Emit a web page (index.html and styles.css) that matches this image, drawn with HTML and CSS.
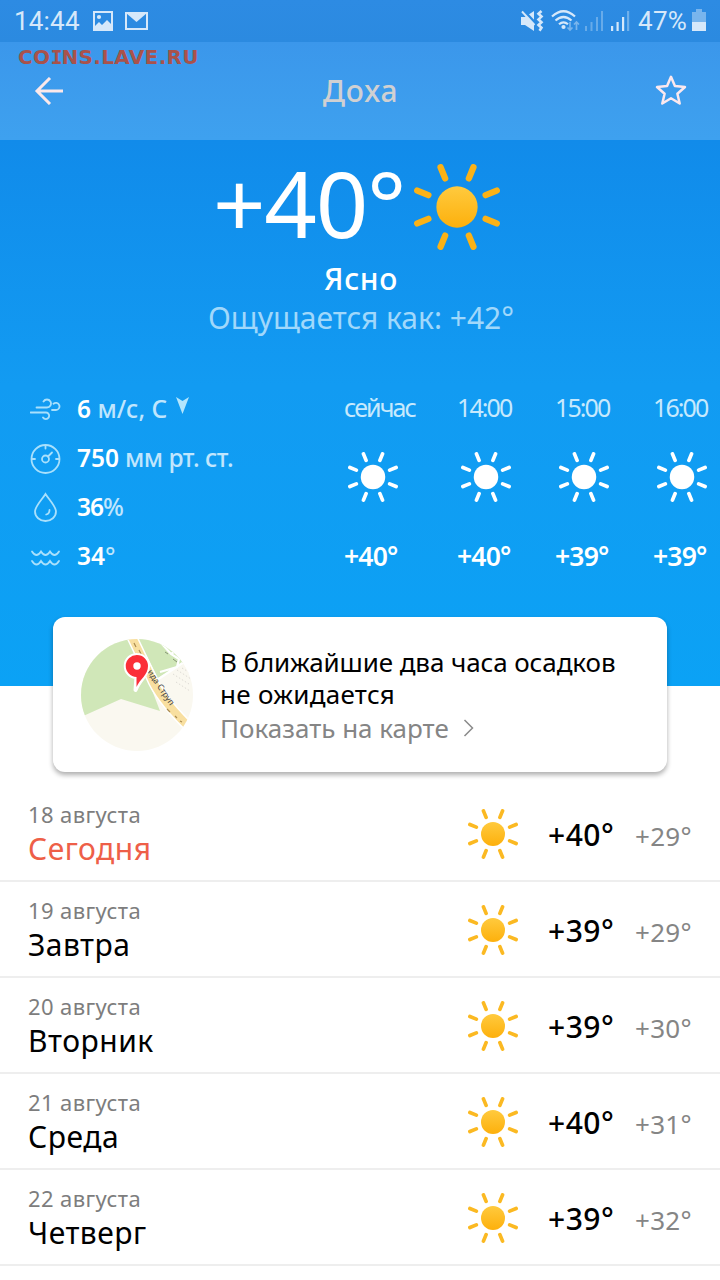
FILE: index.html
```
<!DOCTYPE html>
<html lang="ru">
<head>
<meta charset="utf-8">
<title>Доха — погода</title>
<link rel="stylesheet" href="styles.css">
</head>
<body>
<svg class="defs" width="0" height="0" aria-hidden="true">
  <defs>
    <linearGradient id="sun-fill" x1="0" y1="0" x2="0" y2="1">
      <stop offset="0" stop-color="#ffca3e"/>
      <stop offset="1" stop-color="#fdb00c"/>
    </linearGradient>
    <symbol id="rays" viewBox="0 0 100 100">
      <path d="M63.8 16.7L69.1 3.8M83.3 36.2L96.2 30.9M83.3 63.8L96.2 69.1M63.8 83.3L69.1 96.2M36.2 83.3L30.9 96.2M16.7 63.8L3.8 69.1M16.7 36.2L3.8 30.9M36.2 16.7L30.9 3.8" fill="none" stroke="currentColor" stroke-width="7.400" stroke-linecap="round"/>
    </symbol>
    <symbol id="sun" viewBox="0 0 100 100">
      <use href="#rays"/>
      <circle cx="50" cy="50" r="24" fill="url(#sun-fill)"/>
    </symbol>
    <symbol id="sun-white" viewBox="0 0 100 100">
      <use href="#rays"/>
      <circle cx="50" cy="50" r="24.5" fill="currentColor"/>
    </symbol>
  </defs>
</svg>

<div class="status">
  <span class="clock">14:44</span>
  <svg class="st-photo" width="22" height="20" viewBox="0 0 22 20"><path fill-rule="evenodd" fill="currentColor" d="M1 0h20v20H1zM3 2v13l4-4 3 3 5-5 4 4V2z"/><circle cx="7" cy="6" r="2.1" fill="currentColor"/></svg>
  <svg class="st-mail" width="24" height="18" viewBox="0 0 24 18"><path d="M1 1h21v16H1z" fill="none" stroke="currentColor" stroke-width="2"/><path d="M1 1h21L11.500 10z" fill="currentColor"/></svg>
  <span class="grow"></span>
  <svg class="st-mute" width="23" height="22" viewBox="0 0 23 22"><path d="M0 7h4l9-6v20l-9-6H0z" fill="currentColor"/><path d="M1 -1l14 15" stroke="#2b8ae1" stroke-width="3"/><path d="M1 1.500l12.500 13.500" fill="none" stroke="currentColor" stroke-width="1.900"/><path d="M20.500 1l-3 2.800 3 2.800-3 2.800 3 2.800-3 2.800 3 2.800-2 3" fill="none" stroke="currentColor" stroke-width="2.600"/></svg>
  <svg class="st-wifi" width="30" height="22" viewBox="0 0 30 22"><g fill="none" stroke="currentColor" stroke-width="2.200"><path d="M1 6.500q11.500-10.500 23 0M4.500 10.500q8-7 16 0M8 14.300q4.500-4 9 0"/></g><circle cx="12.500" cy="17" r="2.100" fill="currentColor"/><path d="M19 12v8M16.500 17.500l2.500 2.500 2.500-2.500M25.500 20v-8M23 14.500l2.500-2.500 2.500 2.500" fill="none" stroke="currentColor" stroke-width="1.700" opacity=".45"/></svg>
  <svg class="st-sig" width="19" height="20" viewBox="0 0 19 20" fill="currentColor" opacity=".35"><path d="M0 15h2v5H0zM5.500 11h2v9h-2zM11 6h2v14h-2zM16 0h2v20h-2z"/></svg>
  <svg class="st-sig2" width="19" height="20" viewBox="0 0 19 20" fill="currentColor"><path d="M0 15h2.200v5H0zM5.500 11h2.200v9H5.500zM11 6h2.200v14H11z"/><path d="M16 0h2.200v20H16z" opacity=".4"/></svg>
  <span class="charge">47%</span>
  <svg class="st-bat" width="14" height="22" viewBox="0 0 14 22"><path d="M4 0h6v3h4v10H0V3h4z" fill="currentColor" opacity=".45"/><path d="M0 13h14v9H0z" fill="currentColor"/></svg>
</div>

<div class="bar">
  <svg width="30" height="28" viewBox="0 0 30 28"><path d="M16 1L3 14l13 13M3 14h26" fill="none" stroke="#fbe8ea" stroke-width="3"/></svg>
  <h1>Доха</h1>
  <svg width="34" height="32" viewBox="0 0 34 32"><path d="M17 1.800L20.900 11.100 31 12 23.400 18.700 25.700 28.500 17 23.300 8.300 28.500 10.600 18.700 3 12 13.100 11.100z" fill="none" stroke="#fbe8ee" stroke-width="2.500" stroke-linejoin="round"/></svg>
  <div class="watermark">CO<span>I</span>NS.LAVE.RU</div>
</div>

<section class="hero">
  <div class="now"><span>+40°</span><svg class="sun-big" width="86" height="86"><use href="#sun"/></svg></div>
  <p class="cond">Ясно</p>
  <p class="feels">Ощущается как: +42°</p>
  <div class="details">
    <ul class="metrics">
      <li>
        <svg width="32" height="32" viewBox="0 0 32 32"><path d="M6.500 14.500h10.500a4 4 0 1 0-3.500-6M.500 19.500h15.500a3.300 3.300 0 1 1-3 5M22 17h4a3.600 3.600 0 1 0-2.500-6.300" /></svg>
        <b>6</b><span class="unit">&nbsp;м/с, С</span><svg class="dir" width="14" height="18" viewBox="0 0 14 18"><path d="M0 0l6.500 4L13 0 6.500 17z"/></svg>
      </li>
      <li class="pressure">
        <svg width="32" height="32" viewBox="0 0 32 32"><circle cx="15.500" cy="17" r="14"/><circle cx="15.500" cy="17" r="3.500"/><path d="M18 14.500l4-4M15.500 3.500v3M2 17h3M26 17h3"/></svg>
        <b>750</b><span class="unit">&nbsp;мм рт. ст.</span>
      </li>
      <li class="humidity">
        <svg width="32" height="32" viewBox="0 0 32 32"><path d="M15.500 3C12 8.500 5 15.500 5 20.500a10.500 9.500 0 0 0 21 0C26 15.500 19 8.500 15.500 3zM19.500 19c0 2.500-1.300 4-3.300 4.500"/></svg>
        <b>36</b><span class="unit">%</span>
      </li>
      <li>
        <svg width="32" height="32" viewBox="0 0 32 32"><path d="M2 11.500q4.500 7 9 0 4.500 7 9 0 4.500 7 9 0M2 21q4.500 7 9 0 4.500 7 9 0 4.500 7 9 0"/></svg>
        <b>34</b><span class="unit">°</span>
      </li>
    </ul>
    <div class="hours">
      <div class="hour first"><span class="time">сейчас</span><svg width="50" height="50"><use href="#sun-white"/></svg><b>+40°</b></div>
      <div class="hour"><span class="time">14:00</span><svg width="50" height="50"><use href="#sun-white"/></svg><b>+40°</b></div>
      <div class="hour"><span class="time">15:00</span><svg width="50" height="50"><use href="#sun-white"/></svg><b>+39°</b></div>
      <div class="hour"><span class="time">16:00</span><svg width="50" height="50"><use href="#sun-white"/></svg><b>+39°</b></div>
    </div>
  </div>
</section>

<section class="card">
  <svg class="map" width="112" height="112" viewBox="0 0 112 112">
    <clipPath id="map-clip"><circle cx="56" cy="56" r="56"/></clipPath>
    <g clip-path="url(#map-clip)">
      <path d="M0 0h112v112H0z" fill="#faf8f0"/>
      <path d="M0 0h48l18 38 13 34-39-12L0 78z" fill="#d0e7b8"/>
      <path d="M57 0h55v18L77 39z" fill="#d0e7b8"/>
      <path d="M76 41L103 23 112 18V0M81 5l9 10 8 5-2 8-17 5M90 15l7-5" fill="none" stroke="#fff" stroke-width="2.200"/>
      <path d="M84 13l3 2M92 20l4 3M91 11l3-2" stroke="#7d8a6c" stroke-width=".9"/>
      <path d="M92 35l16 10M96 31l14 9M101 29l10 6M95 43l14 9" fill="none" stroke="#dddad4" stroke-width="1" stroke-dasharray="1.500 2"/>
      <path d="M50-4L70 38Q78 58 106 86" fill="none" stroke="#fff" stroke-width="11"/>
      <path d="M50-4L70 38Q78 58 106 86" fill="none" stroke="#f8dfa0" stroke-width="8"/>
      <path d="M53 4l2 4M58 11l2 4M86 70l3 3M94 77l2 2M99 82l2 1" stroke="#a98b52" stroke-width="1.200"/>
      <text class="street" transform="translate(66 33) rotate(56)">ида Струп</text>
      <path d="M56 16a11 11 0 0 1 11 11c0 9-8 13-12.500 24l1-13A11 11 0 0 1 56 16z" fill="#fff" stroke="#fff" stroke-width="4" stroke-linejoin="round"/>
      <path d="M56 16a11 11 0 0 1 11 11c0 9-8 13-11.500 21V38A11 11 0 0 1 56 16z" fill="#fb2f38"/>
      <circle cx="56" cy="27" r="3.700" fill="#fff"/>
    </g>
  </svg>
  <div class="card-text">
    <p class="l1">В ближайшие два часа осадков</p>
    <p class="l2">не ожидается</p>
    <p class="more">Показать на карте<svg width="12" height="18" viewBox="0 0 12 18"><path d="M1.500 1L9.500 9l-8 8" fill="none" stroke="#8a8a8a" stroke-width="1.500"/></svg></p>
  </div>
</section>

<ul class="days">
  <li><div class="day"><small>18 августа</small><strong class="today">Сегодня</strong></div><svg width="50" height="50"><use href="#sun"/></svg><b>+40°</b><i>+29°</i></li>
  <li><div class="day"><small>19 августа</small><strong>Завтра</strong></div><svg width="50" height="50"><use href="#sun"/></svg><b>+39°</b><i>+29°</i></li>
  <li><div class="day"><small>20 августа</small><strong>Вторник</strong></div><svg width="50" height="50"><use href="#sun"/></svg><b>+39°</b><i>+30°</i></li>
  <li><div class="day"><small>21 августа</small><strong>Среда</strong></div><svg width="50" height="50"><use href="#sun"/></svg><b>+40°</b><i>+31°</i></li>
  <li><div class="day"><small>22 августа</small><strong>Четверг</strong></div><svg width="50" height="50"><use href="#sun"/></svg><b>+39°</b><i>+32°</i></li>
</ul>
</body>
</html>
```
FILE: styles.css
```
* { box-sizing: border-box; }
body {
  margin: 0;
  width: 720px;
  height: 1280px;
  overflow: hidden;
  background: #fff;
  color: #000;
  font-family: "Noto Sans", "Open Sans", sans-serif;
}
h1, p, ul { margin: 0; padding: 0; }
ul { list-style: none; }
svg { display: block; flex: none; }
.defs { position: absolute; }
.grow { flex: 1; }

/* status bar */
.status {
  display: flex;
  align-items: center;
  height: 42px;
  padding: 0 14px 0 14px;
  background: linear-gradient(#2d8be3, #2b8ae0);
  color: #d6e8fa;
  font: 26px/42px Roboto, sans-serif;
}
.clock { width: 78px; letter-spacing: .2px; }
.st-mail { margin-left: 11px; }
.st-wifi { margin-left: 7px; }
.st-sig { margin-left: 4px; }
.st-sig2 { margin-left: 7px; }
.charge { width: 48px; margin-left: 8px; letter-spacing: .3px; }
.st-bat { margin-left: 6px; margin-top: -3px; }

/* title bar */
.bar {
  position: relative;
  display: flex;
  align-items: center;
  justify-content: space-between;
  height: 98px;
  padding: 0 32px 0 34px;
  background: linear-gradient(#3b97eb, #3ea1ef);
}
h1 {
  font-size: 30px;
  line-height: 40px;
  font-weight: 500;
  letter-spacing: .9px;
  padding-left: 3px;
  color: #d0d0d2;
}
.watermark {
  position: absolute;
  left: 18px;
  top: 3px;
  font: bold 20px/24px "DejaVu Sans", sans-serif;
  letter-spacing: .35px;
  color: #a9524b;
}
.watermark span { font-family: "DejaVu Sans Mono", monospace; letter-spacing: -1px; }

/* current weather */
.hero {
  height: 546px;
  padding-top: 12px;
  background: linear-gradient(#118bea, #129bf2 45%, #0ba2f5);
  color: #fff;
}
.now {
  display: flex;
  height: 106px;
  padding-left: 213px;
  font-size: 92px;
  line-height: 101px;
  letter-spacing: -1.3px;
}
.now span { width: 201px; }
.sun-big { margin-top: 12px; color: #fbb216; }
.cond, .feels {
  text-align: center;
  font-size: 30px;
  padding-left: 2px;
}
.cond { line-height: 41px; height: 40px; letter-spacing: .6px; font-weight: 500; }
.feels { line-height: 39px; height: 86px; letter-spacing: 0; color: #a0d8fb; }

.details { display: flex; height: 200px; }
.metrics { width: 314px; padding-left: 30px; flex: none; }
.metrics li {
  display: flex;
  align-items: center;
  height: 49px;
  font-size: 24.5px;
  line-height: 49px;
  font-weight: 500;
}
.metrics svg { fill: none; stroke: #a9e0fc; stroke-width: 1.8; stroke-linecap: round; margin-right: 15px; }
.metrics b { font-weight: 600; }
.metrics .unit { color: #c0e6fd; }
.metrics .dir { fill: #b4e6fd; stroke: none; margin: -6px 0 0 9px; }
.pressure .unit { letter-spacing: -.5px; }
.humidity { letter-spacing: -1px; }

.hours { display: flex; padding-left: 30px; flex: 1; overflow: hidden; }
.hour { width: 98px; flex: none; display: flex; flex-direction: column; }
.hour.first { width: 113px; }
.time { font-size: 25px; line-height: 47px; height: 68px; letter-spacing: -1.9px; color: #c6e9fd; }
.hour svg { margin-left: 4px; }
.hour b { font-size: 26.5px; font-weight: 600; line-height: 40px; margin-top: 34px; letter-spacing: -.8px; }

/* nowcast card */
.card {
  position: relative;
  display: flex;
  width: 614px;
  height: 155px;
  margin: -69px 53px 0;
  padding: 22px 28px;
  background: #fff;
  border-radius: 12px;
  box-shadow: 0 3px 5px rgba(0, 0, 0, .32);
}
.street { font-size: 8.5px; fill: #444; font-family: "Noto Sans", sans-serif; }
.card-text { padding: 7px 0 0 27px; font-size: 26px; line-height: 32px; white-space: nowrap; }
.l1 { letter-spacing: -.1px; }
.l2 { letter-spacing: .3px; }
.more { display: flex; align-items: center; color: #858585; line-height: 36px; }
.more svg { margin-left: 14px; }

/* daily forecast */
.days { margin-top: 14px; }
.days li {
  display: flex;
  height: 96px;
  padding-left: 28px;
  border-bottom: 2px solid #eee;
}
.day { width: 440px; padding-top: 14px; }
.day small { display: block; font-size: 22px; line-height: 29px; letter-spacing: .4px; color: #7d7d7d; }
.day strong { display: block; font-size: 30px; line-height: 40px; font-weight: 400; letter-spacing: .5px; }
.day .today { color: #ee5f48; }
.days svg { margin-top: 23px; color: #fbb922; }
.days b { width: 87px; margin-left: 30px; font-size: 30px; font-weight: 500; line-height: 97px; letter-spacing: .5px; }
.days i { font-style: normal; font-size: 26px; line-height: 100px; letter-spacing: .3px; color: #858585; }
```
